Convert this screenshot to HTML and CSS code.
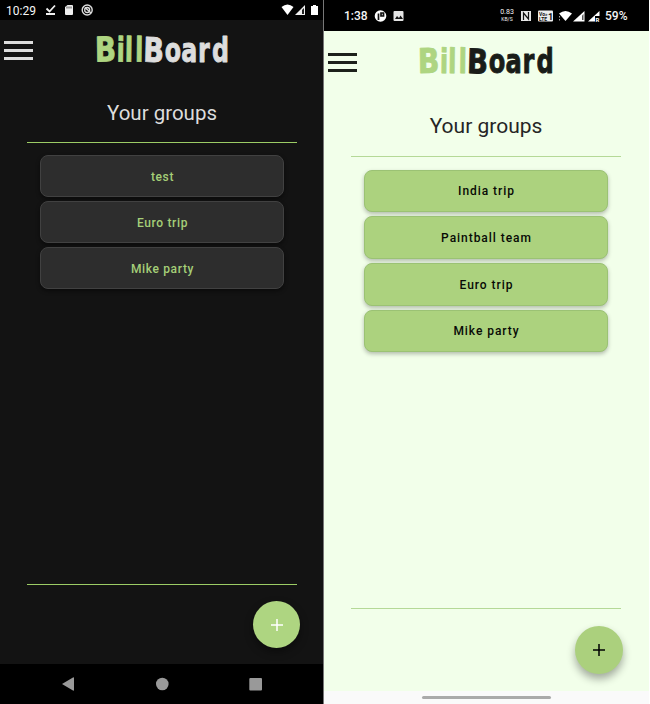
FILE: index.html
```html
<!DOCTYPE html>
<html lang="en">
<head>
<meta charset="utf-8">
<title>BillBoard</title>
<link rel="stylesheet" href="styles.css">
</head>
<body>
<main class="screens">
  <section class="phone dark">
    <div class="status">
      <span class="time">10:29</span>
      <svg class="status-icons" width="60" height="20" viewBox="0 0 60 20">
        <path d="M4.500 8.500l3 3 5.500-6M4 14h9" fill="none" stroke="#eee" stroke-width="1.800"/>
        <path d="M25.500 5H30q1 0 1 1v8q0 1-1 1h-6q-1 0-1-1V7z" fill="#eee"/>
        <path d="M25 6.500v2M27 6.500v2M29 6.500v2" stroke="#222" stroke-width=".8"/>
        <circle cx="45.200" cy="10" r="5" fill="none" stroke="#ddd" stroke-width="1.400"/>
        <circle cx="45.200" cy="10" r="2.500" fill="none" stroke="#ddd" stroke-width="1.300"/>
        <path d="M43 7.500l6 5.500" stroke="#ddd" stroke-width="1.400"/>
      </svg>
      <svg class="status-right" width="41" height="20" viewBox="0 0 41 20">
        <path d="M2.500 7Q8.500 2 14.500 7L8.500 15z" fill="#fff"/>
        <path d="M16 15L26 5v10z" fill="#eee"/>
        <path d="M23 10l2-2v6h-2z" fill="#222"/>
        <path d="M32 6h2V5h3v1h2v9h-7z" fill="#fff"/>
      </svg>
    </div>
    <header class="top">
      <div class="menu"><i></i><i></i><i></i></div>
      <svg class="logo" width="140" height="36" viewBox="0 0 140 36">
        <text class="bill" transform="translate(1 29.500) scale(.82 1) rotate(-1)">B</text>
        <text class="bill" transform="scale(.7 1)" y="29.500" x="32 43.800 58.500" rotate="1">ill</text>
        <text class="board" transform="translate(49 29.500) scale(.8 1) rotate(2)">B</text>
        <text class="board" transform="scale(.7 1)" y="29.500" x="101 124.500 148.500 168.500">oard</text>
      </svg>
    </header>
    <h1>Your groups</h1>
    <div class="list">
      <button>test</button>
      <button>Euro trip</button>
      <button>Mike party</button>
    </div>
    <div class="actions">
      <button class="fab" aria-label="Add group"><svg width="14" height="14" viewBox="0 0 14 14"><path d="M7 1v12M1 7h12"/></svg></button>
    </div>
    <nav class="nav">
      <svg width="323" height="40" viewBox="0 0 323 40" fill="#999">
        <path d="M62 20L73 13.500q1-.5 1 .5v12q0 1-1 .5z"/>
        <circle cx="162.300" cy="20" r="6.300"/>
        <rect x="249.300" y="14" width="12.700" height="12.500" rx="1"/>
      </svg>
    </nav>
  </section>
  <section class="phone light">
    <div class="status">
      <span class="time">1:38</span>
      <svg class="status-icons" width="40" height="20" viewBox="0 0 40 20">
        <circle cx="11.500" cy="10" r="5.800" fill="#fff"/>
        <path d="M9.500 14V7.500M12 7h2.500v3H12z" fill="none" stroke="#111" stroke-width="1.700"/>
        <rect x="24.500" y="5" width="10" height="10" rx="1" fill="#e4e4e4"/>
        <path d="M26 13l2-3 2 2 1.500-2.500L34 13z" fill="#111"/>
      </svg>
      <span class="rate">0.83<small>KB/S</small></span>
      <svg class="status-right" width="84" height="20" viewBox="0 0 84 20">
        <rect x="1" y="5" width="10" height="10" fill="#e8e8e8"/>
        <path d="M3.500 14V7l5 6V6" fill="none" stroke="#111" stroke-width="1.200"/>
        <rect x="18" y="4.500" width="15" height="11" rx="1" fill="#eee"/>
        <text class="volte" x="19" y="9.600">Vo»</text>
        <text class="volte" x="19" y="14.800">LTE</text>
        <text class="sim" x="28" y="14">1</text>
        <path d="M39 7.500Q45.500 2.500 52 7.500L45.500 15z" fill="#fff"/>
        <path d="M39.500 10v1.500M39.500 13v1.500" stroke="#aaa"/>
        <path d="M53 15.500L64.500 5v10.500z" fill="#fff"/>
        <path d="M62 9.500l1.500-1.500v6H62z" fill="#555"/>
        <path d="M68 15.500L79.500 5v5H75v5.500z" fill="#fff"/>
        <text class="roam" x="75.500" y="15.500">R</text>
      </svg>
      <span class="battery">59%</span>
    </div>
    <header class="top">
      <div class="menu"><i></i><i></i><i></i></div>
      <svg class="logo" width="142" height="36" viewBox="0 0 140 36" preserveAspectRatio="none">
        <text class="bill" transform="translate(1 30) scale(.82 1) rotate(-1)">B</text>
        <text class="bill" transform="scale(.7 1)" y="30" x="32 43.800 58.500" rotate="1">ill</text>
        <text class="board" transform="translate(49 30) scale(.8 1) rotate(2)">B</text>
        <text class="board" transform="scale(.7 1)" y="30" x="101 124.500 148.500 168.500">oard</text>
      </svg>
    </header>
    <h1>Your groups</h1>
    <div class="list">
      <button>India trip</button>
      <button>Paintball team</button>
      <button>Euro trip</button>
      <button>Mike party</button>
    </div>
    <div class="actions">
      <button class="fab" aria-label="Add group"><svg width="14" height="14" viewBox="0 0 14 14"><path d="M7 1v12M1 7h12"/></svg></button>
    </div>
    <nav class="nav"><span class="handle"></span></nav>
  </section>
</main>
</body>
</html>
```
FILE: styles.css
```css
* { box-sizing: border-box; }
body { margin: 0; background: #fff; font-family: Roboto, sans-serif; overflow: hidden; }
.screens { display: flex; width: 650px; height: 704px; }
.phone { display: flex; flex-direction: column; height: 704px; }
.dark { width: 324px; background: #131313; color: #ddd; border-right: 1px solid #777; }
.light { width: 324.500px; background: #f2ffea; color: #252525; }
.status { display: flex; flex: none; align-items: center; background: #000; color: #f5f5f5; }
.dark .status { height: 20px; padding: 0 3px 0 6px; font-size: 12px; }
.dark .time { width: 36px; padding-top: 1px; }
.dark .status-right { margin-left: auto; }
.light .status { height: 31px; padding-left: 20px; font-size: 12px; font-weight: 500; }
.light .time { width: 25px; }
.rate { width: 18px; margin-left: 89px; font-size: 7px; line-height: 7px; font-weight: 400; text-align: center; }
.rate small { display: block; font-size: 5px; line-height: 6px; }
.light .status-right { margin-left: 4px; flex: none; }
.battery { margin-left: 1px; }
.volte { font-size: 5px; font-weight: 700; fill: #111; }
.sim { font-size: 9px; font-weight: 700; fill: #111; }
.roam { font-size: 6px; font-weight: 700; fill: #fff; }
.top { display: flex; flex: none; }
.dark .top { height: 62px; padding: 12px 0 0 4px; }
.light .top { height: 64px; padding: 12px 0 0 4px; }
.menu { display: flex; flex-direction: column; gap: 5px; width: 29px; padding-top: 9px; }
.menu i { display: block; height: 3px; background: #ddd; }
.light .menu { padding-top: 10px; }
.light .menu i { background: #1d211b; }
.logo { margin-left: 61px; overflow: visible; }
.light .logo { margin-left: 60px; }
.logo text { font: bold 34px "DejaVu Sans", sans-serif; stroke-width: .9; stroke-linejoin: round; }
.bill { fill: #aed581; stroke: #aed581; }
.board { fill: #ddd; stroke: #ddd; }
.light .board { fill: #191c18; stroke: #191c18; }
h1 { flex: none; margin: 0 26px 0 27px; border-bottom: 1px solid #9ccc65; text-align: center; font-size: 20.500px; font-weight: 400; }
.dark h1 { height: 61px; line-height: 62px; }
.light h1 { height: 62px; line-height: 62px; margin-right: 27.500px; border-color: #b5d997; font-size: 21px; }
.list { flex: 1; display: flex; flex-direction: column; margin: 0 26px 0 27px; padding: 12px 13px; border-bottom: 1px solid #9ccc65; }
.light .list { margin-right: 27.500px; padding-top: 12.500px; border-color: #b5d997; }
.list button { flex: none; height: 42px; margin-bottom: 4px; padding: 2px 0 0 1px; border: 1px solid #414141; border-radius: 8px; background: #2d2d2d; color: #a5cf78; font: 500 12px Roboto, sans-serif; letter-spacing: .65px; box-shadow: 0 2px 4px #0007; }
.light .list button { height: 42.700px; padding-top: 1px; border-color: #9bc274; background: #acd27e; color: #080a06; letter-spacing: .95px; box-shadow: 0 2px 4px #0004; }
.actions { flex: none; display: flex; justify-content: flex-end; }
.dark .actions { height: 79px; padding: 16px 23px 0; }
.light .actions { height: 82px; padding: 17px 25.500px 0; }
.fab { display: flex; align-items: center; justify-content: center; width: 47px; height: 47px; padding: 0; border: 0; border-radius: 50%; background: #aed581; box-shadow: 0 4px 8px #0006; }
.light .fab { width: 48px; height: 48px; background: #abd07d; box-shadow: 0 5px 8px #0005; }
.fab path { fill: none; stroke: #fff; stroke-width: 1.500; }
.light .fab path { stroke: #000; }
.nav { flex: none; }
.dark .nav { height: 40px; background: #000; }
.light .nav { height: 13px; display: flex; justify-content: center; background: #fafafa; }
.handle { width: 129px; height: 3px; margin-top: 5px; border-radius: 2px; background: #aaa; }
```
